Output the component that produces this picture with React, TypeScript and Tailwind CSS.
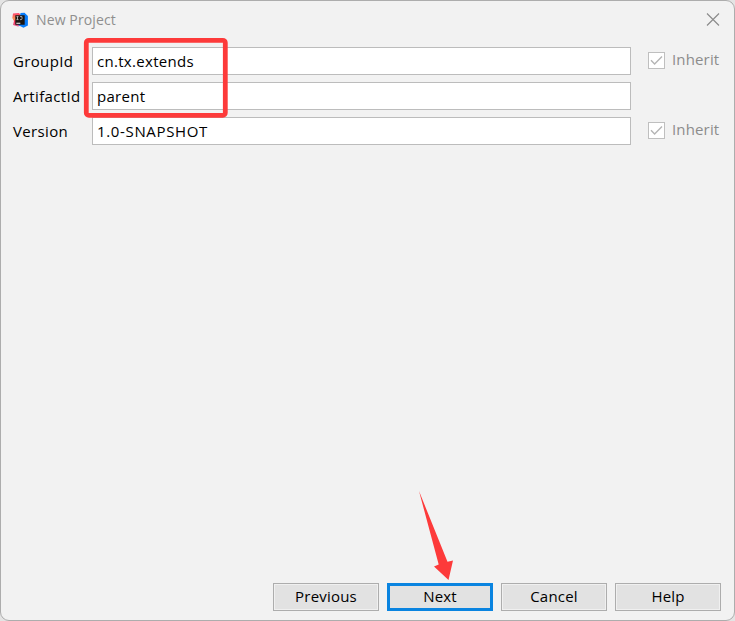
function IdeaLogo() {
  return (
    <svg className="h-4 w-4" viewBox="0 0 16 16">
      <defs>
        <linearGradient id="warm" x1="0" y1="0" x2="0" y2="1">
          <stop offset="0" stopColor="#fe416d" />
          <stop offset="0.45" stopColor="#f99a52" />
          <stop offset="0.6" stopColor="#fe315d" />
          <stop offset="1" stopColor="#e0608f" />
        </linearGradient>
      </defs>
      <path d="M1 1.5 7 1l2 2.5v10L6 14.5 1 13 2 9 0.3 6Z" fill="url(#warm)" />
      <path d="M8.5 1 12.5 0.8 15.9 4v9.5L11.5 15.7 6 13 8 4Z" fill="#087cfa" />
      <path d="M3.3 3.3h9.4v9.4H3.3z" fill="#1a1512" />
      <path d="M4.5 4.6h2M5.5 4.6v3M4.5 7.6h2M8 4.6h2v2.2q0 .8-.9.8H8" fill="none" stroke="#ccc" strokeWidth="0.8" />
      <path d="M4.3 10.8h4v1h-4z" fill="#fff" />
    </svg>
  );
}

function Inherit() {
  return (
    <div className="ml-[17px] flex h-7 items-start">
      <div className="mt-[5px] h-[17px] w-[17px] shrink-0 border border-[#bfbfbf] bg-white">
        <svg className="h-[15px] w-[15px]" viewBox="0 0 15 15" fill="none" stroke="#b4b4b4" strokeWidth="1.4">
          <path d="M2 7.3 5.6 10.9 13 3.5" />
        </svg>
      </div>
      <span className="ml-[7px] mt-[2px] text-[15px] leading-5 tracking-[0.15px] text-[#8c8c8c]">Inherit</span>
    </div>
  );
}

function Row({ label, value, inherit, wide }: { label: string; value: string; inherit?: boolean; wide?: boolean }) {
  return (
    <div className="flex h-7">
      <div className="w-[79px] shrink-0 whitespace-nowrap leading-7 tracking-[0.35px]">{label}</div>
      <div className="w-[539px] shrink-0 border border-[#bcbcbc] bg-white pl-1 leading-[27px]">
        <span className={wide ? "tracking-[0.65px]" : "tracking-[0.3px]"}>{value}</span>
      </div>
      {inherit && <Inherit />}
    </div>
  );
}

function DialogButton({ label, primary }: { label: string; primary?: boolean }) {
  return (
    <button
      className={
        primary
          ? "h-7 w-[106px] border-[3px] border-[#0a84e0] bg-[#e2e2e2] pb-0.5 leading-5 tracking-[0.2px]"
          : "h-7 w-[106px] border border-[#adadad] bg-[#e2e2e2] pb-0.5 leading-5 tracking-[0.2px] shadow-[inset_0_0_0_1px_#f0f0f0]"
      }
    >
      {label}
    </button>
  );
}

export default function App() {
  return (
    <div className="h-[621px] w-[735px] bg-[#e4e4e4] font-['Open_Sans',sans-serif] text-[15px] text-black">
      <div className="relative flex h-[621px] w-[735px] flex-col overflow-hidden rounded-[9px] border border-[#adadad] bg-[#f2f2f2]">
        <header className="flex h-[37px] items-center pl-[11px] pr-[14px]">
          <IdeaLogo />
          <span className="ml-2 text-[14px] tracking-[0.12px] text-[#8f8f8f]">New Project</span>
          <svg className="ml-auto h-3.5 w-3.5" viewBox="0 0 14 14" stroke="#8a8a8a" strokeWidth="1.1">
            <path d="M1 .5 13 12.5M13 .5 1 12.5" />
          </svg>
        </header>
        <main className="mt-[9px] flex flex-1 flex-col gap-[7px] pl-3">
          <Row label="GroupId" value="cn.tx.extends" inherit />
          <Row label="ArtifactId" value="parent" />
          <Row label="Version" value="1.0-SNAPSHOT" inherit wide />
        </main>
        <footer className="mb-[9px] flex justify-end gap-2 pr-[13px]">
          <DialogButton label="Previous" />
          <DialogButton label="Next" primary />
          <DialogButton label="Cancel" />
          <DialogButton label="Help" />
        </footer>
        <svg className="absolute left-[82px] top-[35px] h-[84px] w-[148px]" viewBox="0 0 148 84">
          <rect x="3.3" y="4.3" width="139" height="75" rx="2.5" fill="none" stroke="#fd3a3a" strokeWidth="4.8" />
        </svg>
        <svg className="absolute left-[399px] top-[479px] h-[110px] w-[70px]" viewBox="0 0 70 110">
          <path d="M19 11 47.5 81.8 53 80.5 48.5 100 34 86.5 38.7 84.5Z" fill="#fd3a3a" />
        </svg>
      </div>
    </div>
  );
}
